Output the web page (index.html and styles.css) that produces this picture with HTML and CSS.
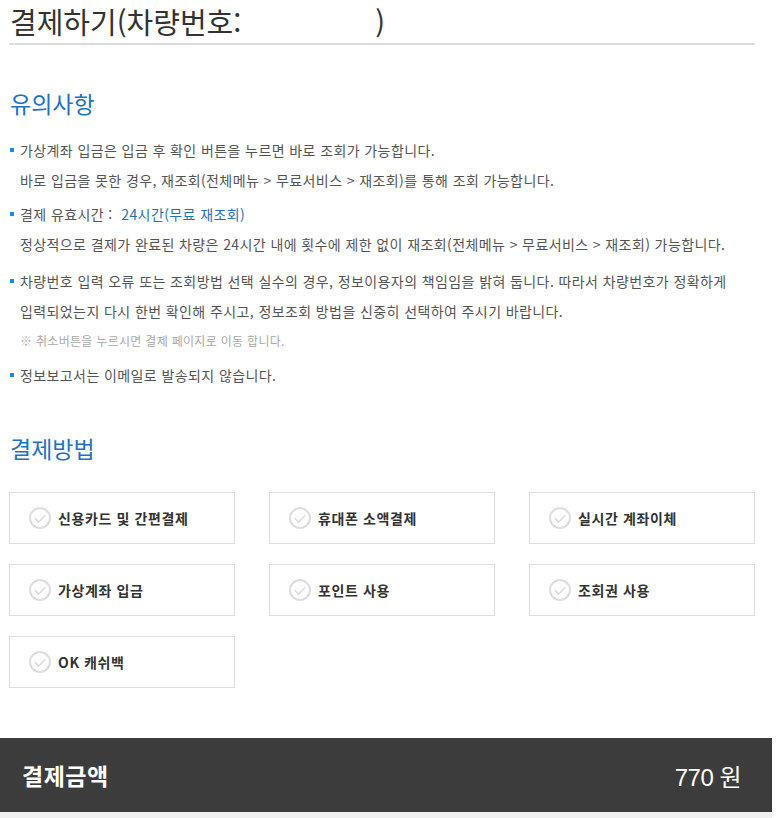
FILE: index.html
```html
<!DOCTYPE html>
<html lang="ko">
<head>
  <meta charset="UTF-8" />
  <title>결제하기</title>
  <link rel="stylesheet" href="styles.css">
</head>
<body>
  <div class="page">
    <div class="content">
      <h1 class="page-title">결제하기(차량번호:<span class="car-no"></span>)</h1>

      <!-- 유의사항 -->
      <section class="notice">
        <h2>유의사항</h2>
        <ul class="notice-list">
          <li>가상계좌 입금은 입금 후 확인 버튼을 누르면 바로 조회가 가능합니다.<br>바로 입금을 못한 경우, 재조회(전체메뉴 &gt; 무료서비스 &gt; 재조회)를 통해 조회 가능합니다.</li>
          <li>결제 유효시간 : &nbsp;<span class="hl">24시간(무료 재조회)</span><br>정상적으로 결제가 완료된 차량은 24시간 내에 횟수에 제한 없이 재조회(전체메뉴 &gt; 무료서비스 &gt; 재조회) 가능합니다.</li>
          <li class="wide">차량번호 입력 오류 또는 조회방법 선택 실수의 경우, 정보이용자의 책임임을 밝혀 둡니다. 따라서 차량번호가 정확하게<br>입력되었는지 다시 한번 확인해 주시고, 정보조회 방법을 신중히 선택하여 주시기 바랍니다.
            <p class="sub-note">※ 취소버튼을 누르시면 결제 페이지로 이동 합니다.</p>
          </li>
          <li>정보보고서는 이메일로 발송되지 않습니다.</li>
        </ul>
      </section>

      <!-- 결제방법 -->
      <section class="method">
        <h2>결제방법</h2>
        <div class="method-grid">
          <button class="method-btn"><span class="check"></span>신용카드 및 간편결제</button>
          <button class="method-btn"><span class="check"></span>휴대폰 소액결제</button>
          <button class="method-btn"><span class="check"></span>실시간 계좌이체</button>
          <button class="method-btn"><span class="check"></span>가상계좌 입금</button>
          <button class="method-btn"><span class="check"></span>포인트 사용</button>
          <button class="method-btn"><span class="check"></span>조회권 사용</button>
          <button class="method-btn"><span class="check"></span>OK 캐쉬백</button>
        </div>
      </section>
    </div>

    <div class="total-bar">
      <span class="total-label">결제금액</span>
      <span class="total-price">770 원</span>
    </div>
    <div class="bottom-strip"></div>
  </div>
</body>
</html>
```

FILE: styles.css
```css
body {
  margin: 0;
  background: #fff;
  font-family: "Noto Sans CJK KR", "Noto Sans", sans-serif;
  color: #555;
}

.page {
  width: 772px;
}

.content {
  padding: 0 17px 0 9px;
}

/* Title */
.page-title {
  margin: 0;
  padding: 1px 0 2px 1px;
  font-size: 29px;
  font-weight: 400;
  line-height: 40px;
  color: #333;
  border-bottom: 2px solid #ddd;
}

.car-no {
  display: inline-block;
  width: 134px;
}

/* Section headings */
h2 {
  margin: 0;
  font-size: 23px;
  font-weight: 400;
  line-height: 30px;
  color: #1d72c4;
  padding-left: 1px;
}

.notice h2 {
  margin-top: 43px;
}

.notice-list {
  list-style: none;
  margin: 17px 0 0;
  padding: 0;
}

.notice-list li {
  position: relative;
  padding-left: 11px;
  font-size: 14px;
  line-height: 30px;
  margin-bottom: 4px;
  letter-spacing: 0.4px;
}

.notice-list li.wide {
  margin-top: 7px;
}

.notice-list li::before {
  content: "";
  position: absolute;
  left: 1px;
  top: 13px;
  width: 4px;
  height: 4px;
  background: #1a8ae6;
}

.hl {
  color: #1d72c4;
}

.sub-note {
  margin: 0;
  font-size: 12px;
  color: #aaa;
  line-height: 30px;
  letter-spacing: 0.3px;
}

/* Payment methods */
.method h2 {
  margin-top: 43px;
}

.method-grid {
  display: grid;
  grid-template-columns: repeat(3, 226px);
  column-gap: 34px;
  row-gap: 20px;
  margin-top: 29px;
}

.method-btn {
  display: flex;
  align-items: center;
  height: 52px;
  padding: 0 0 0 20px;
  background: #fff;
  border: 1px solid #ddd;
  font-family: inherit;
  font-size: 14px;
  font-weight: 700;
  letter-spacing: 0.6px;
  color: #333;
  text-align: left;
  cursor: pointer;
}

.check {
  position: relative;
  flex: none;
  width: 22px;
  height: 22px;
  margin-left: -1px;
  margin-right: 7px;
  box-sizing: border-box;
  border: 2px solid #ddd;
  border-radius: 50%;
}

.check::after {
  content: "";
  position: absolute;
  left: 6px;
  top: 3px;
  width: 5px;
  height: 9px;
  border-right: 1.5px solid #ccc;
  border-bottom: 1.5px solid #ccc;
  transform: rotate(45deg);
}

/* Total bar */
.total-bar {
  display: flex;
  justify-content: space-between;
  align-items: center;
  margin-top: 50px;
  height: 74px;
  padding: 0 31px 0 22px;
  background: #3c3c3c;
  color: #fff;
  font-size: 23px;
  font-weight: 700;
  letter-spacing: 0.5px;
}

.total-price {
  font-family: "Liberation Sans", "Noto Sans CJK KR", sans-serif;
  font-weight: 400;
  font-size: 24px;
  letter-spacing: -0.5px;
}

.bottom-strip {
  height: 6px;
  background: #f0f0f0;
}
```
